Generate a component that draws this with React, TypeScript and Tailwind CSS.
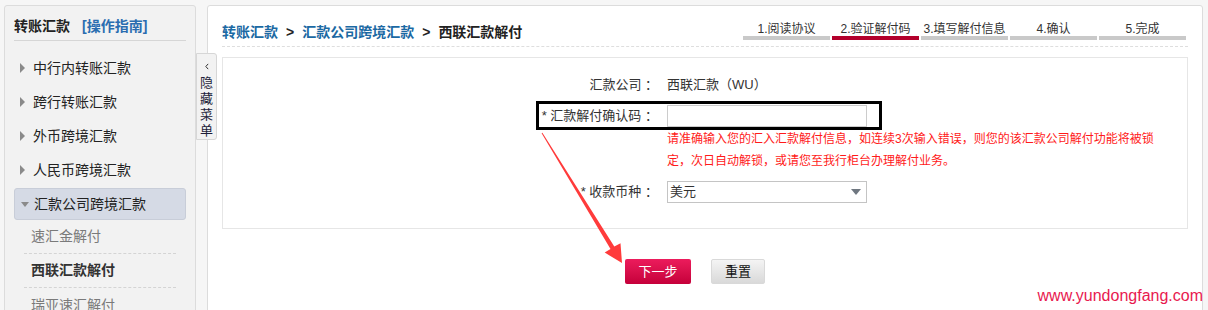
import React from 'react';

const menu = ['中行内转账汇款', '跨行转账汇款', '外币跨境汇款', '人民币跨境汇款'];
const subMenu = [
  { name: '速汇金解付', active: false },
  { name: '西联汇款解付', active: true },
  { name: '瑞亚速汇解付', active: false },
];
const steps = ['1.阅读协议', '2.验证解付码', '3.填写解付信息', '4.确认', '5.完成'];

function Sidebar() {
  return (
    <div className="w-[192px] h-[330px] shrink-0 border border-[#dcdcdc] rounded-[3px] bg-[#f2f2f2] px-[9px]">
      <div className="h-[35px] pt-[10px] border-b border-[#d6d6d6] text-[14px] leading-[20px] font-bold whitespace-nowrap">
        <span className="text-[#222]">转账汇款</span>
        <span className="ml-[12px] text-[#2a6db0]">[操作指南]</span>
      </div>
      <div className="mt-[10px]">
        {menu.map((m) => (
          <div key={m} className="h-[34px] flex items-center pl-[6px] gap-[8px] text-[14px] text-[#222]">
            <span className="w-0 h-0 border-y-[5px] border-y-transparent border-l-[5px] border-l-[#8a8a8a]" />
            {m}
          </div>
        ))}
        <div className="mt-[1px] h-[32px] flex items-center pl-[5px] gap-[5px] rounded-[3px] border border-[#c8cdd8] bg-[#d5dae5] text-[14px] text-[#222]">
          <span className="w-0 h-0 border-x-[4px] border-x-transparent border-t-[5px] border-t-[#8a8a8a] ml-[1px]" />
          汇款公司跨境汇款
        </div>
        {subMenu.map((s, i) => (
          <div
            key={s.name}
            className={`mx-[10px] h-[34px] flex items-center pl-[7px] text-[14px] ${
              i < subMenu.length - 1 ? 'border-b border-dashed border-[#d4d4d4]' : ''
            } ${s.active ? 'font-bold text-[#333]' : 'text-[#7a7a7a]'}`}
          >
            {s.name}
          </div>
        ))}
      </div>
    </div>
  );
}

function Steps() {
  return (
    <div className="flex gap-[2px] mt-[16px] mr-[2px]">
      {steps.map((s, i) => (
        <div key={s} className="w-[87px] flex flex-col items-center">
          <span className="text-[12px] leading-[14px] text-[#333] whitespace-nowrap">{s}</span>
          <span className={`w-full h-[4px] ${i === 1 ? 'bg-[#b3002c]' : 'bg-[#c9c9c9]'}`} />
        </div>
      ))}
    </div>
  );
}

export default function App() {
  return (
    <div className="relative w-[1208px] h-[310px] overflow-hidden bg-[#f6f6f6] flex pt-[5px] pl-[4px] pr-[5px] font-['Liberation_Sans','Noto_Sans_CJK_SC',sans-serif]">
      <Sidebar />

      <div className="relative ml-[11px] flex-1 h-[330px] border border-[#dcdcdc] rounded-[3px] bg-white px-[14px]">
        {/* hide menu tab */}
        <div className="absolute left-[-12px] top-[47px] w-[21px] h-[87px] z-10 border border-[#d6d6d6] rounded-r-[3px] bg-[#f2f2f2] flex flex-col items-center pt-[9px] text-[13px] leading-[16px] text-[#1d1d3a]">
          <svg width="8" height="12" viewBox="0 0 8 12" className="mb-[5px]">
            <path d="M6 1.5 L2 6 L6 10.5" fill="none" stroke="#222" strokeWidth="1.6" />
          </svg>
          <span>隐</span>
          <span>藏</span>
          <span>菜</span>
          <span>单</span>
        </div>

        <div className="h-[41px] flex justify-between items-start border-b border-dashed border-[#dedede]">
          <div className="mt-[16px] text-[14px] leading-[20px] font-bold whitespace-nowrap">
            <span className="text-[#1b69a3]">转账汇款</span>
            <span className="mx-[8px] text-[#222]">&gt;</span>
            <span className="text-[#1b69a3]">汇款公司跨境汇款</span>
            <span className="mx-[8px] text-[#222]">&gt;</span>
            <span className="text-[#222]">西联汇款解付</span>
          </div>
          <Steps />
        </div>

        <div className="relative mt-[10px] h-[172px] border border-[#e6e6e6] pt-[17px] text-[13px] text-[#333]">
          <div className="flex items-center h-[20px]">
            <div className="w-[437px] text-right pr-[2px]">汇款公司 ：</div>
            <div className="ml-[7px]">西联汇款（WU）</div>
          </div>

          <div className="flex items-center mt-[10px] h-[22px]">
            <div className="w-[437px] text-right pr-[2px]">* 汇款解付确认码 ：</div>
            <div className="ml-[7px] w-[200px] h-[22px] border border-[#cccccc] bg-white" />
          </div>

          <div className="ml-[444px] mt-[1px] text-[12px] leading-[22px] text-[#ff1a1a] whitespace-nowrap">
            <p>请准确输入您的汇入汇款解付信息，如连续3次输入错误，则您的该汇款公司解付功能将被锁</p>
            <p>定，次日自动解锁，或请您至我行柜台办理解付业务。</p>
          </div>

          <div className="flex items-center mt-[9px] h-[22px]">
            <div className="w-[437px] text-right pr-[2px]">* 收款币种 ：</div>
            <div className="ml-[7px] w-[200px] h-[22px] border border-[#c4c4c4] bg-white flex items-center justify-between pl-[2px] pr-[5px]">
              <span>美元</span>
              <span className="w-0 h-0 border-x-[5px] border-x-transparent border-t-[6px] border-t-[#6f7780]" />
            </div>
          </div>

          {/* annotation box */}
          <div className="absolute left-[313px] top-[43px] w-[346px] h-[29px] border-[3px] border-black" />
        </div>

        <div className="flex gap-[20px] mt-[30px] ml-[403px]">
          <button className="w-[66px] h-[25px] rounded-[2px] bg-gradient-to-b from-[#ec1b5c] to-[#c5003a] text-white text-[13px]">
            下一步
          </button>
          <button className="w-[54px] h-[25px] rounded-[2px] border border-[#d9d9d9] bg-gradient-to-b from-[#f4f4f4] to-[#d9d9d9] text-[#111] text-[13px]">
            重置
          </button>
        </div>
      </div>

      {/* red arrow */}
      <svg className="absolute left-0 top-0 pointer-events-none" width="1208" height="310">
        <polygon
          points="542.4,132.7 614.3,246.6 620.5,243.2 622,263 604.7,252.6 610.5,249.0 541.6,133.3"
          fill="#ff3b3b"
        />
      </svg>

      <div className="absolute right-[5px] bottom-[4px] text-[16px] leading-[20px] text-[#e8194f] font-['Liberation_Sans',sans-serif]">
        www.yundongfang.com
      </div>
    </div>
  );
}
